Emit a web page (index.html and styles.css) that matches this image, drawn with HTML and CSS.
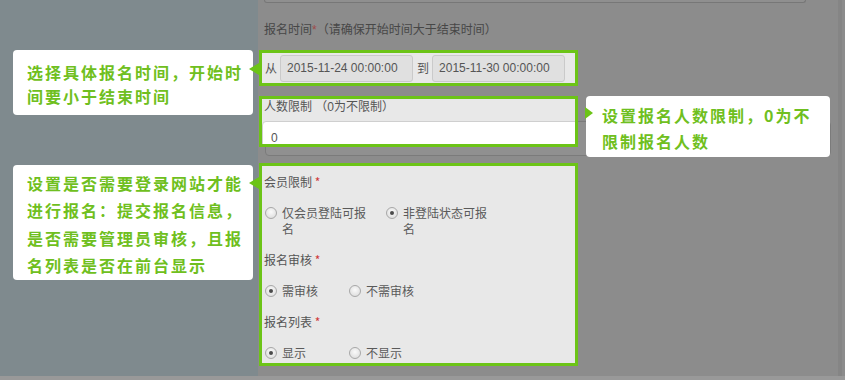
FILE: index.html
```html
<!DOCTYPE html>
<html lang="zh">
<head>
<meta charset="utf-8">
<title>报名设置</title>
<link rel="stylesheet" href="styles.css">
</head>
<body>
<div class="page">
  <aside class="sidebar"></aside>
  <main class="main">
    <div class="prev-input"></div>
    <div class="dim-label">报名时间<span class="dim-req">*</span>（请确保开始时间大于结束时间）</div>

    <div class="hl hl-date">
      <span class="word">从</span>
      <span class="date-input">2015-11-24 00:00:00</span>
      <span class="word word-to">到</span>
      <span class="date-input">2015-11-30 00:00:00</span>
    </div>

    <div class="hl hl-people">
      <div class="people-label">人数限制 （0为不限制）</div>
      <div class="num-input">0</div>
    </div>
    <div class="dim-input"></div>

    <div class="hl hl-member">
      <div class="field-label first">会员限制 <span class="req">*</span></div>
      <div class="radios">
        <label class="opt opt-wide"><span class="radio"></span><span class="opt-text">仅会员登陆可报名</span></label>
        <label class="opt opt-wide"><span class="radio checked"></span><span class="opt-text">非登陆状态可报名</span></label>
      </div>
      <div class="field-label">报名审核 <span class="req">*</span></div>
      <div class="radios">
        <label class="opt"><span class="radio checked"></span><span class="opt-text">需审核</span></label>
        <label class="opt"><span class="radio"></span><span class="opt-text">不需审核</span></label>
      </div>
      <div class="field-label">报名列表 <span class="req">*</span></div>
      <div class="radios">
        <label class="opt"><span class="radio checked"></span><span class="opt-text">显示</span></label>
        <label class="opt"><span class="radio"></span><span class="opt-text">不显示</span></label>
      </div>
    </div>
  </main>
  <div class="rail"></div>
  <div class="rail-edge"></div>

  <div class="tip tip-date">选择具体报名时间，开始时<br>间要小于结束时间</div>
  <span class="arrow arrow-left arrow-date"></span>

  <div class="tip tip-people">设置报名人数限制，0为不<br>限制报名人数</div>
  <span class="arrow arrow-right arrow-people"></span>

  <div class="tip tip-member">设置是否需要登录网站才能<br>进行报名：提交报名信息，<br>是否需要管理员审核，且报<br>名列表是否在前台显示</div>
  <span class="arrow arrow-left arrow-member"></span>
</div>
</body>
</html>
```

FILE: styles.css
```css
html, body {
  margin: 0;
  padding: 0;
}
body {
  width: 845px;
  height: 380px;
  background: #999999;
  overflow: hidden;
  font-family: "Liberation Sans", "Noto Sans CJK SC", sans-serif;
  font-size: 12px;
  color: #555;
}
.page {
  position: relative;
  display: flex;
  height: 376px;
  background: #8c8c8c;
}
.sidebar {
  width: 258px;
  flex: none;
  background: #7f8a8e;
}
.main {
  flex: 1;
  display: flex;
  flex-direction: column;
  align-items: flex-start;
}
.rail {
  width: 4px;
  flex: none;
  background: #858585;
}
.rail-edge {
  width: 3px;
  flex: none;
  background: #8c8c8c;
}
.prev-input {
  margin-left: 6px;
  width: 542px;
  height: 3px;
  box-sizing: border-box;
  border: 1px solid #777;
  border-top: none;
  border-radius: 0 0 3px 3px;
  background: #8f8f8f;
}
.dim-label {
  margin-top: 19px;
  margin-left: 6px;
  line-height: 16px;
  color: #474747;
}
.dim-req {
  color: #9e4a4a;
}
.hl {
  margin-left: 1px;
  width: 319px;
  box-sizing: border-box;
  border: 3px solid #6cc417;
  background: #e8e8e8;
  position: relative;
  z-index: 1;
}
.hl-date {
  margin-top: 12px;
  height: 36px;
  display: flex;
  align-items: center;
  padding-left: 3px;
}
.word {
  font-family: "Noto Sans CJK SC", sans-serif;
  color: #555;
  line-height: 16px;
}
.word-to {
  margin-left: 4px;
}
.date-input {
  margin-left: 4px;
  width: 133px;
  height: 27px;
  box-sizing: border-box;
  padding-left: 6px;
  border: 1px solid #cacaca;
  border-radius: 3px;
  background: #e0e0e0;
  line-height: 25px;
  color: #555;
}
.word + .date-input {
  margin-left: 3px;
}
.hl-people {
  margin-top: 10px;
  height: 51px;
  overflow: hidden;
}
.people-label {
  height: 22px;
  padding-left: 2px;
  line-height: 16px;
  color: #555;
}
.num-input {
  margin-left: 0;
  height: 35px;
  width: 340px;
  box-sizing: border-box;
  border: 1px solid #cfcfcf;
  border-radius: 4px;
  background: #fff;
  padding-left: 8px;
  line-height: 33px;
  color: #555;
}
.dim-input {
  margin-top: -26px;
  margin-left: 7px;
  width: 566px;
  height: 35px;
  box-sizing: border-box;
  border: 1px solid #7b7b7b;
  border-radius: 4px;
  background: #909090;
}
.hl-member {
  margin-top: 7px;
  height: 203px;
  padding-left: 2px;
}
.field-label {
  margin-top: 13px;
  line-height: 16px;
  color: #555;
  font-family: "Noto Sans CJK SC", sans-serif;
}
.field-label.first {
  margin-top: 8px;
}
.req {
  color: #d03a3a;
}
.radios {
  margin-top: 15px;
  display: flex;
  align-items: flex-start;
}
.radios + .field-label {
  margin-top: 15px;
}
.radios:nth-of-type(1) + .field-label {
  margin-top: 13px;
}
.opt {
  display: flex;
  align-items: flex-start;
  width: 84px;
  flex: none;
  margin-left: 1px;
}
.opt + .opt {
  margin-left: 0;
}
.opt-wide {
  width: 121px;
}
.opt-wide + .opt-wide {
  width: 120px;
}
.radio {
  flex: none;
  width: 12px;
  height: 12px;
  margin-top: 2px;
  box-sizing: border-box;
  border: 1px solid #a8a8a8;
  border-radius: 50%;
  background: radial-gradient(circle at 50% 40%, #fafafa 0%, #e2e2e2 70%, #d4d4d4 100%);
  display: flex;
  align-items: center;
  justify-content: center;
}
.radio.checked::after {
  content: "";
  width: 4px;
  height: 4px;
  border-radius: 50%;
  background: #4a4a4a;
}
.opt-text {
  margin-left: 5px;
  line-height: 16px;
  font-family: "Noto Sans CJK SC", sans-serif;
  color: #5a5a5a;
}
.opt-wide .opt-text {
  width: 88px;
}
.tip {
  position: absolute;
  z-index: 2;
  box-sizing: border-box;
  background: #fff;
  border-radius: 4px;
  font-family: "Noto Sans CJK SC", sans-serif;
  font-weight: 700;
  font-size: 16px;
  letter-spacing: 2px;
  color: #6fbf20;
  white-space: nowrap;
}
.tip-date {
  left: 13px;
  top: 50px;
  width: 240px;
  height: 65px;
  padding: 10px 0 0 14px;
  line-height: 24px;
}
.tip-people {
  left: 586px;
  top: 96px;
  width: 244px;
  height: 61px;
  padding: 6px 0 0 16px;
  line-height: 26px;
}
.tip-member {
  left: 13px;
  top: 165px;
  width: 240px;
  height: 115px;
  padding: 5px 0 0 14px;
  line-height: 27.3px;
}
.arrow {
  position: absolute;
  z-index: 3;
  width: 0;
  height: 0;
  border-top: 6px solid transparent;
  border-bottom: 6px solid transparent;
}
.arrow-left {
  border-right: 10px solid #6cc417;
}
.arrow-right {
  border-left: 8px solid #6cc417;
}
.arrow-date {
  left: 249px;
  top: 63px;
}
.arrow-member {
  left: 249px;
  top: 177px;
}
.arrow-people {
  left: 585px;
  top: 107px;
}
```
